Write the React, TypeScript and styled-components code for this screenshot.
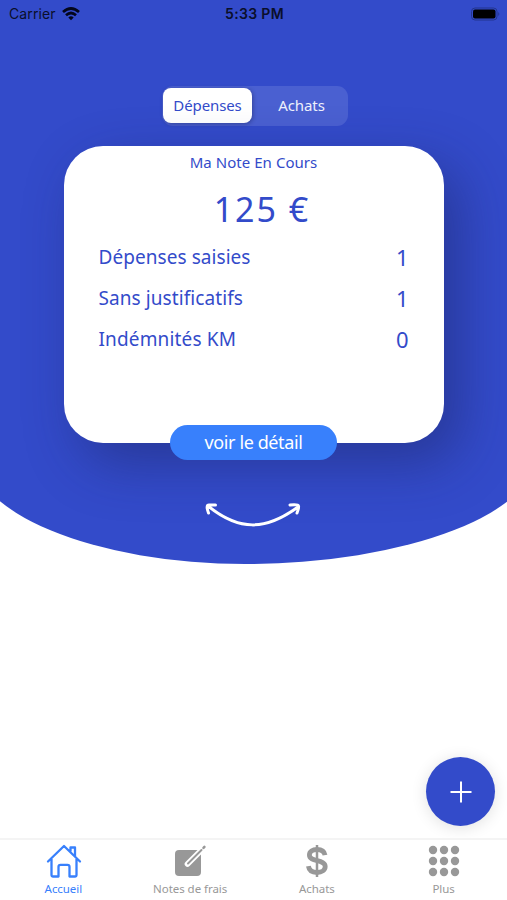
import React from "react";
import styled, { createGlobalStyle } from "styled-components";

const BLUE = "#334bca";
const ACCENT = "#3880fc";
const GREY = "#989898";

const GlobalStyle = createGlobalStyle`
  * { box-sizing: border-box; }
  body { margin: 0; background: #fff; font-family: "Noto Sans", sans-serif; }
  button { font-family: inherit; border: 0; padding: 0; }
`;

const Screen = styled.div`
  width: 507px;
  height: 900px;
  display: flex;
  flex-direction: column;
  overflow: hidden;
  background: #fff;
`;

const Hero = styled.header`
  flex: none;
  height: 564px;
  margin: 0 -33px 0 -30px;
  padding: 0 33px 0 30px;
  display: flex;
  flex-direction: column;
  align-items: center;
  overflow: hidden;
  background: ${BLUE};
  border-radius: 0 0 295px 275px / 0 0 115px 115px;
`;

const StatusBar = styled.div`
  width: 507px;
  height: 27px;
  padding: 0 7px 0 9px;
  display: grid;
  grid-template-columns: 1fr auto 1fr;
  align-items: center;
  font-family: Inter, sans-serif;
  font-size: 14px;
  color: #0a0f2b;
`;

const Carrier = styled.span`
  display: flex;
  align-items: center;
  gap: 6px;
  letter-spacing: 0.12px;
`;

const Clock = styled.span`
  font-weight: 600;
  letter-spacing: 0.35px;
`;

const Battery = styled.svg`
  justify-self: end;
`;

const Segmented = styled.div`
  display: flex;
  width: 186px;
  height: 40px;
  margin: 59px 0 0 2px;
  padding: 2px 1px;
  border-radius: 11px;
  background: #4a60d1;
`;

const Segment = styled.button<{ $active?: boolean }>`
  width: ${(p) => (p.$active ? 89 : 95)}px;
  height: 35px;
  padding: 0 0 1px ${(p) => (p.$active ? 1 : 5)}px;
  border-radius: 8px;
  font-size: 15px;
  letter-spacing: -0.1px;
  color: ${(p) => (p.$active ? BLUE : "#eef0fc")};
  background: ${(p) => (p.$active ? "#fff" : "transparent")};
  box-shadow: ${(p) => (p.$active ? "1px 1px 4px rgba(0,0,30,.3)" : "none")};
`;

const Card = styled.section`
  width: 380px;
  height: 297px;
  flex: none;
  margin-top: 20px;
  padding: 5px 35px 0 35px;
  display: flex;
  flex-direction: column;
  border-radius: 39px;
  background: #fff;
  color: ${BLUE};
  box-shadow: 16px 20px 54px rgba(26, 34, 90, 0.45);
`;

const CardTitle = styled.h2`
  margin: 0;
  font-size: 15px;
  line-height: 22px;
  font-weight: 400;
  text-align: center;
  letter-spacing: 0.05px;
`;

const Amount = styled.div`
  height: 64px;
  margin-bottom: -1px;
  padding: 4px 0 0 17px;
  font-size: 34px;
  line-height: 64px;
  font-weight: 450;
  text-align: center;
  letter-spacing: 2px;
`;

const Row = styled.div`
  height: 41px;
  display: flex;
  align-items: center;
  justify-content: space-between;
`;

const Label = styled.span<{ $spacing: number }>`
  font-size: 19px;
  letter-spacing: ${(p) => p.$spacing}px;
`;

const Value = styled.span`
  font-size: 22px;
`;

const DetailButton = styled.button`
  flex: none;
  width: 167px;
  height: 35px;
  margin-top: -18px;
  padding-bottom: 2px;
  border-radius: 18px;
  background: ${ACCENT};
  color: #fff;
  font-size: 18px;
  letter-spacing: -0.4px;
`;

const Swipe = styled.svg`
  flex: none;
  margin: 40px 0 0 -2px;
`;

const Content = styled.main`
  flex: 1;
  display: flex;
  align-items: flex-end;
  justify-content: flex-end;
  padding: 0 12px 12px 0;
`;

const AddButton = styled.button`
  width: 69px;
  height: 69px;
  display: grid;
  place-items: center;
  border-radius: 50%;
  background: ${BLUE};
  box-shadow: 0 2px 16px rgba(0, 0, 0, 0.12);
`;

const TabBar = styled.nav`
  flex: none;
  height: 62px;
  display: grid;
  grid-template-columns: repeat(4, 1fr);
  border-top: 2px solid #f4f4f4;
  background: #fff;
`;

const Tab = styled.a<{ $active?: boolean }>`
  display: flex;
  flex-direction: column;
  align-items: center;
  padding-top: 4px;
  font-size: 11.5px;
  line-height: 16px;
  letter-spacing: -0.05px;
  color: ${(p) => (p.$active ? ACCENT : GREY)};
  svg { margin: 0 0 3px ${(p) => (p.$active ? 2 : 0)}px; }
`;

const rows = [
  { label: "Dépenses saisies", value: 1, spacing: 0.06 },
  { label: "Sans justificatifs", value: 1, spacing: 0.08 },
  { label: "Indémnités KM", value: 0, spacing: 0.15 },
];

const WifiIcon = () => (
  <svg width="18" height="14" viewBox="0 0 18 14" fill="none" stroke="#03061c" strokeWidth="2.7">
    <path d="M1 5Q9 -2 17 5M4 8.2Q9 3.8 14 8.2" />
    <path d="M6.3 10.5Q9 8.2 11.7 10.5L9 13.3Z" fill="#03061c" stroke="none" />
  </svg>
);

const HomeIcon = () => (
  <svg width="36" height="34" viewBox="0 0 36 34" fill="none" stroke="currentColor" strokeWidth="2.3" strokeLinecap="round" strokeLinejoin="round">
    <path d="M2 17.5 18 2l16 15.5M5.5 15v16.2q0 1.3 1.3 1.3h5.7V22.8q0-2 2-2h7q2 0 2 2v9.7h5.7q1.3 0 1.3-1.3V15M24.5 7V3.5h4.5V12" />
  </svg>
);

const NoteIcon = () => (
  <svg width="34" height="34" viewBox="0 0 34 34" strokeLinecap="round">
    <rect x="2" y="6" width="26" height="26" rx="4" fill="currentColor" />
    <path d="M14.5 20 28.5 6" stroke="#fff" strokeWidth="5.6" />
    <path d="M15 19.5 28.5 6" stroke="currentColor" strokeWidth="2" />
    <path d="m30.5 3.8.9-.9" stroke="currentColor" strokeWidth="2.6" />
  </svg>
);

const DollarIcon = () => (
  <svg width="24" height="34" viewBox="0 0 24 34" fill="none" stroke="currentColor">
    <path d="M20 11.2C19.4 7.5 16.4 5.5 12 5.5c-4.5 0-7.6 2-7.6 5.5 0 7.5 15.8 3.8 15.8 11.5 0 3.7-3.4 6-8.2 6-5 0-8-2.2-8.6-6.3" strokeWidth="4.8" />
    <path d="M12 1v32" strokeWidth="2.5" />
  </svg>
);

const GridIcon = () => (
  <svg width="32" height="34" viewBox="0 0 32 34" fill="currentColor">
    {[6, 17, 28].map((y) => [5, 16, 27].map((x) => <circle key={`${x}-${y}`} cx={x} cy={y} r="4.2" />))}
  </svg>
);

export default function App() {
  return (
    <>
      <GlobalStyle />
      <Screen>
        <Hero>
          <StatusBar>
            <Carrier>Carrier <WifiIcon /></Carrier>
            <Clock>5:33 PM</Clock>
            <Battery width="30" height="14" viewBox="0 0 30 14">
              <rect x="1.5" y="1" width="25.5" height="12" rx="3.5" fill="none" stroke="#23358e" />
              <rect x="3" y="2.5" width="22.5" height="9" rx="2" fill="#000" />
              <path d="M28.3 5v4q2-2 0-4" fill="#23358e" />
            </Battery>
          </StatusBar>
          <Segmented>
            <Segment $active>Dépenses</Segment>
            <Segment>Achats</Segment>
          </Segmented>
          <Card>
            <CardTitle>Ma Note En Cours</CardTitle>
            <Amount>125 €</Amount>
            {rows.map((r) => (
              <Row key={r.label}>
                <Label $spacing={r.spacing}>{r.label}</Label>
                <Value>{r.value}</Value>
              </Row>
            ))}
          </Card>
          <DetailButton>voir le détail</DetailButton>
          <Swipe width="98" height="30" viewBox="0 0 98 30" fill="none" stroke="#fff" strokeWidth="3" strokeLinecap="round" strokeLinejoin="round">
            <path d="M4 6C35 31 61 31 94 7M4.5 13Q1.5 5 5 5T11.5 5M86 5Q94 4 94.5 6T93 13" />
          </Swipe>
        </Hero>
        <Content>
          <AddButton aria-label="Ajouter">
            <svg width="24" height="24" viewBox="0 0 24 24" stroke="#fff" strokeWidth="2">
              <path d="M12 1.5v21M1.5 12h21" />
            </svg>
          </AddButton>
        </Content>
        <TabBar>
          <Tab $active><HomeIcon />Accueil</Tab>
          <Tab><NoteIcon />Notes de frais</Tab>
          <Tab><DollarIcon />Achats</Tab>
          <Tab><GridIcon />Plus</Tab>
        </TabBar>
      </Screen>
    </>
  );
}
